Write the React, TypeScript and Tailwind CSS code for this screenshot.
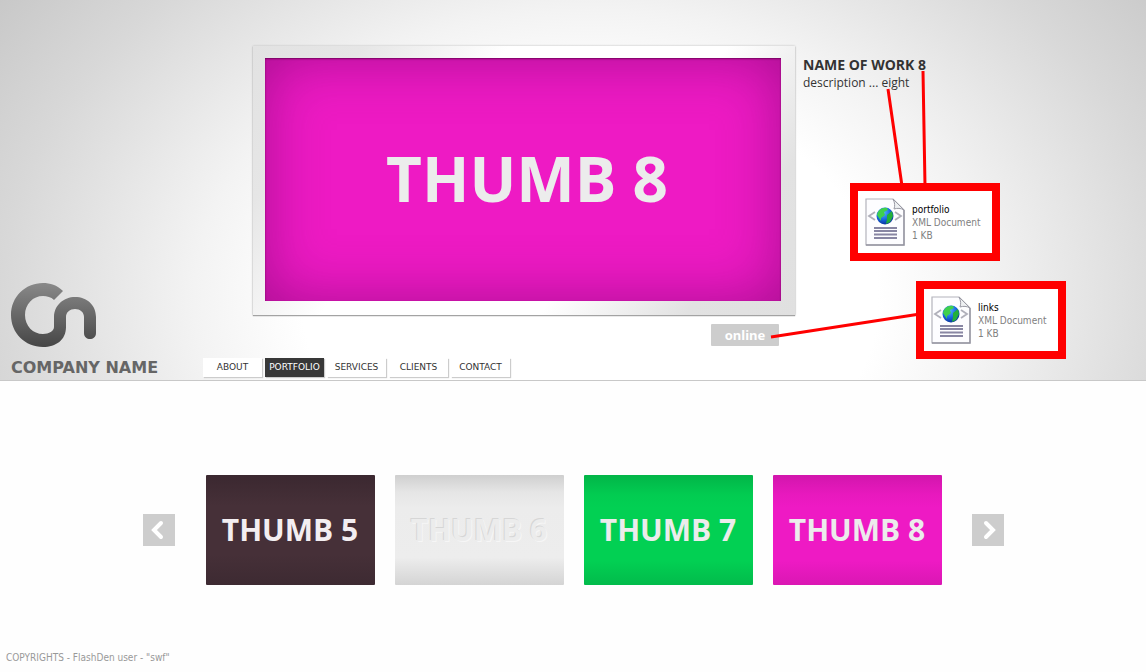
import React from 'react';

const navItems = ['ABOUT', 'PORTFOLIO', 'SERVICES', 'CLIENTS', 'CONTACT'];

const thumbs = [
  {
    label: 'THUMB 5',
    box: 'bg-[linear-gradient(#3b2830_0%,#463038_28%,#463038_72%,#3d2a32_100%)] text-[#f3eef1]',
    text: '',
  },
  {
    label: 'THUMB 6',
    box: 'bg-[linear-gradient(#cfcfcf_0%,#e6e6e6_16%,#ececec_30%,#ededed_75%,#d4d4d4_100%)] text-[#ececec]',
    text: '[text-shadow:-1px_-1px_0_#d6d6d6,1px_1px_0_#f6f6f6]',
  },
  {
    label: 'THUMB 7',
    box: 'bg-[linear-gradient(#02b548_0%,#02cc51_18%,#02d053_30%,#02d053_78%,#02bb4b_100%)] text-[#ececec]',
    text: '',
  },
  {
    label: 'THUMB 8',
    box: 'bg-[linear-gradient(#d216ad_0%,#e819be_18%,#ee1ac4_30%,#ee1ac4_78%,#da17b3_100%)] text-[#ececec]',
    text: '',
  },
];

function Logo() {
  return (
    <svg viewBox="0 0 88 66" className="ml-[10px] h-[66px] w-[88px]" fill="none" aria-hidden="true">
      <defs>
        <linearGradient id="logoFill" gradientUnits="userSpaceOnUse" x1="0" y1="0" x2="0" y2="66">
          <stop offset="0" stopColor="#8a8a8a" />
          <stop offset="1" stopColor="#454545" />
        </linearGradient>
      </defs>
      <path
        d="M53 9 C47 3 40 1 33 1 C15 1 1 15 1 33 C1 51 15 65 33 65 C46 65 56 58 56 45 V35 C56 30 60 27 65 27 C70 27 74 30 74 35 V51 C74 59 86 59 86 51 V35 C86 23 77 15 65 15 C54 15 44 23 44 35 V45 C44 49 39 52 33 52 C23 52 15 44 15 33 C15 22 23 14 33 14 C37 14 41 15 44 18 Z"
        fill="url(#logoFill)"
      />
    </svg>
  );
}

function FileIcon() {
  return (
    <svg viewBox="0 0 40 48" className="h-[48px] w-[40px] shrink-0" aria-hidden="true">
      <defs>
        <radialGradient id="globe" cx="0.4" cy="0.3" r="0.75">
          <stop offset="0" stopColor="#5ab8ff" />
          <stop offset="0.55" stopColor="#1668e0" />
          <stop offset="1" stopColor="#0a2a90" />
        </radialGradient>
      </defs>
      <path d="M1 1 H28 L39 12 V47 H1 Z" fill="#fdfdff" stroke="#b4b4bc" strokeWidth="1.2" />
      <path d="M1 47 H39 V12" fill="none" stroke="#9494a0" strokeWidth="1.4" />
      <path d="M28 1 C30 5 30 8 29 11 C32 10 36 10 39 12 Z" fill="#eef0f2" stroke="#9a9aa4" />
      <path d="M10 14 L4 18 L10 22 M30 14 L36 18 L30 22" fill="none" stroke="#b0b0ba" strokeWidth="1.8" />
      <circle cx="20" cy="18" r="8.5" fill="url(#globe)" />
      <path d="M12 17 C13 12 17 9 22 10 L23 12 L19 14 L20 17 L16 20 L16 23 Z" fill="#3fd04c" />
      <path d="M22 17 L27 13 L28 18 L25 24 L21 26 L22 21 Z" fill="#22b03a" />
      <path d="M9 30 H32 M9 33 H32 M9 36.5 H32 M9 40 H32" stroke="#8886a3" strokeWidth="1.8" />
    </svg>
  );
}

function FileNote({ name, place }: { name: string; place: string }) {
  return (
    <div
      className={`absolute flex h-[78px] w-[150px] items-center border-8 border-[#ff0000] bg-white pl-[7px] ${place}`}
    >
      <FileIcon />
      <div className="ml-[7px] whitespace-nowrap font-['DejaVu_Sans_Condensed','DejaVu_Sans',sans-serif] text-[10px] leading-[13px] text-[#808080]">
        <p className="text-black">{name}</p>
        <p>XML Document</p>
        <p>1 KB</p>
      </div>
    </div>
  );
}

function Arrow({ label, path }: { label: string; path: string }) {
  return (
    <button type="button" aria-label={label} className="grid size-8 shrink-0 place-items-center bg-[#cdcdcd]">
      <svg viewBox="0 0 32 32" className="size-8" fill="none" stroke="#fff" strokeWidth="4" strokeLinecap="round">
        <path d={path} />
      </svg>
    </button>
  );
}

export default function App() {
  return (
    <div className="relative flex min-h-screen flex-col bg-[#fefefe] font-['Noto_Sans',sans-serif]">
      <header className="flex border-b border-[#c8c8c8] bg-[radial-gradient(ellipse_600px_440px_at_590px_300px,#ffffff_0%,#ffffff_48%,#f3f3f3_66%,#d8d8d8_98%,#c8c8c8_120%)]">
        <div className="flex w-[203px] shrink-0 flex-col justify-end">
          <Logo />
          <h1 className="mt-2 ml-[11px] whitespace-nowrap font-['DejaVu_Sans',sans-serif] text-[16px] leading-6 font-bold text-[#666]">
            COMPANY NAME
          </h1>
        </div>
        <div className="min-w-0 flex-1 pt-[46px]">
          <div className="ml-[50px] flex">
            <div>
              <figure className="flex h-[269px] w-[542px] bg-[linear-gradient(125deg,#e2e2e2_0%,#e6e6e6_15%,#ffffff_35%,#ffffff_65%,#e2e2e2_85%,#e0e0e0_100%)] p-3 pr-[14px] pb-[14px] shadow-[0_0_2px_#bbb,0_1px_1px_#999]">
                <div className="grid flex-1 place-items-center bg-[#ee1ac4] pb-1 pl-2 font-['Open_Sans',sans-serif] text-[62px] leading-none font-bold text-[#ececec] shadow-[inset_0_0_60px_rgba(80,0,80,0.45),inset_0_1px_2px_#800060]">
                  THUMB 8
                </div>
              </figure>
              <div className="mt-[9px] mr-4 flex justify-end">
                <button
                  type="button"
                  className="h-[22px] w-[68px] rounded-[1px] bg-[#cdcdcd] font-['Noto_Sans',sans-serif] text-[13px] leading-5 font-bold text-white"
                >
                  online
                </button>
              </div>
            </div>
            <div className="ml-2 pt-[10px] whitespace-nowrap text-[#333]">
              <h2 className="font-['Open_Sans',sans-serif] text-[14px] leading-[18px] font-bold">NAME OF WORK 8</h2>
              <p className="font-['Open_Sans',sans-serif] text-[12px] leading-[17px]">description ... eight</p>
            </div>
          </div>
          <nav className="mt-3 mb-[3px] flex gap-[3px]">
            {navItems.map((item) => (
              <a
                key={item}
                href={`#${item.toLowerCase()}`}
                className={`grid h-[19px] w-[59px] place-items-center font-['DejaVu_Sans',sans-serif] text-[9px] leading-none shadow-[1px_1px_1px_#ccc] ${
                  item === 'PORTFOLIO' ? 'bg-[#383838] text-white' : 'bg-white text-[#333]'
                }`}
              >
                {item}
              </a>
            ))}
          </nav>
        </div>
      </header>

      <main className="flex items-center justify-center pt-[94px]">
        <Arrow label="Previous" path="M18 9 L11 16 L18 23" />
        <ul className="mr-[30px] ml-[31px] flex gap-5">
          {thumbs.map((t) => (
            <li key={t.label}>
              <button
                type="button"
                className={`h-[110px] w-[169px] rounded-[1px] font-['Open_Sans',sans-serif] text-[30px] leading-none font-bold ${t.box}`}
              >
                <span className={t.text}>{t.label}</span>
              </button>
            </li>
          ))}
        </ul>
        <Arrow label="Next" path="M14 9 L21 16 L14 23" />
      </main>

      <footer className="mt-auto pb-[6px] pl-[6px] font-['DejaVu_Sans_Condensed','DejaVu_Sans',sans-serif] text-[10px] leading-4 text-[#999]">
        COPYRIGHTS - FlashDen user - "swf"
      </footer>

      <svg
        className="pointer-events-none absolute top-0 left-0 h-[381px] w-[1146px]"
        viewBox="0 0 1146 381"
        fill="none"
        stroke="#ff0000"
        strokeWidth="3"
        aria-hidden="true"
      >
        <path d="M888 89 L902 186 M923 71 L925 186 M771 337 L920 314" />
      </svg>
      <FileNote name="portfolio" place="top-[183px] left-[850px]" />
      <FileNote name="links" place="top-[281px] left-[916px]" />
    </div>
  );
}
